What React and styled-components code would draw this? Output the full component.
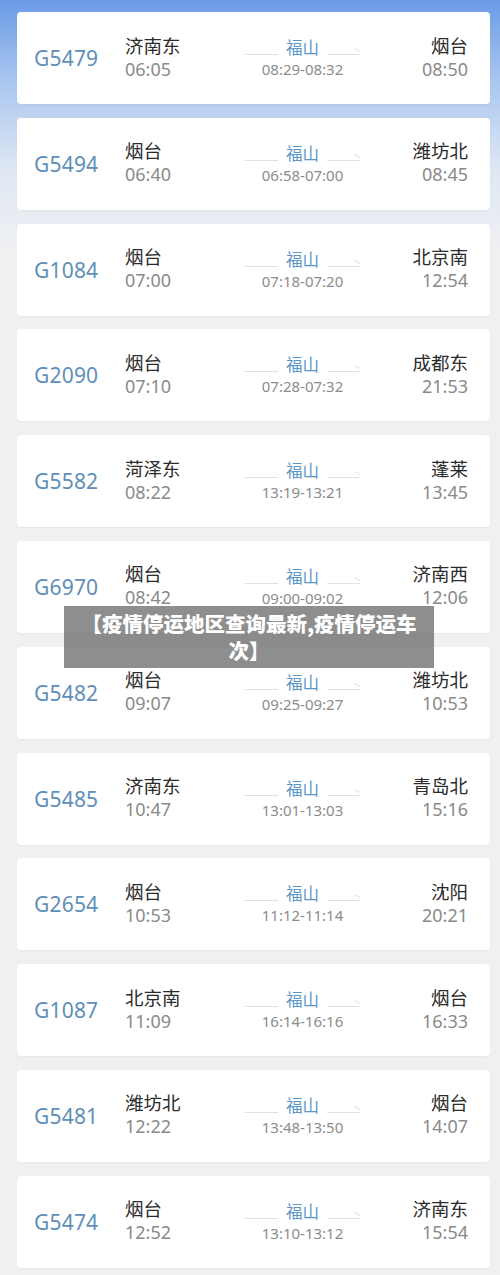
import styled, { createGlobalStyle } from "styled-components";

const GlobalStyle = createGlobalStyle`
  html, body {
    margin: 0;
    padding: 0;
  }
  body {
    font-family: "Noto Sans", "Noto Sans CJK SC", sans-serif;
    background: #f0f0f0;
  }
`;

const Page = styled.div`
  position: relative;
  width: 500px;
  min-height: 1275px;
  box-sizing: border-box;
  padding: 12px 10px 8px 17px;
  background: linear-gradient(
    180deg,
    #6b9be6 0px,
    #a9c6ef 80px,
    #dfe7f3 170px,
    #eff0f2 250px,
    #f0f0f0 100%
  );
  display: flex;
  flex-direction: column;
  gap: 13.8px;
`;

const Card = styled.div`
  height: 92px;
  background: #fff;
  border-radius: 4px;
  box-shadow: 0 1px 2px rgba(0, 0, 0, 0.04);
  display: grid;
  grid-template-columns: 91px 120px 115px 1fr;
  align-items: center;
  padding: 0 22px 0 17px;
`;

const TrainNo = styled.div`
  font-size: 21px;
  color: #5e8fb8;
  letter-spacing: 0.2px;
`;

const Stop = styled.div`
  display: flex;
  flex-direction: column;
  align-items: ${(p) => (p.$right ? "flex-end" : "flex-start")};
  margin-top: -3px;
`;

const Station = styled.div`
  font-family: "Noto Sans CJK SC", sans-serif;
  font-size: 18.5px;
  line-height: 24px;
  color: #2b2b2b;
`;

const Time = styled.div`
  font-size: 18px;
  line-height: 24px;
  color: #8a8a8a;
`;

const Mid = styled.div`
  display: flex;
  flex-direction: column;
  align-items: stretch;
`;

const MidTop = styled.div`
  display: flex;
  align-items: flex-end;
`;

const Line = styled.div`
  position: relative;
  flex: 1;
  height: 1px;
  margin-bottom: 3px;
  background: #e2e2e2;

  &::after {
    content: "";
    display: ${(p) => (p.$arrow ? "block" : "none")};
    position: absolute;
    right: 0;
    top: -3px;
    width: 6px;
    height: 1px;
    background: #e2e2e2;
    transform: rotate(30deg);
    transform-origin: right center;
  }
`;

const Via = styled.div`
  font-family: "Noto Sans CJK SC", sans-serif;
  font-size: 16.5px;
  line-height: 22px;
  color: #5b96c6;
  padding: 0 8px;
`;

const ViaTime = styled.div`
  font-size: 15px;
  line-height: 22px;
  color: #8c8c8c;
  text-align: center;
`;

const Banner = styled.div`
  position: absolute;
  left: 64px;
  top: 606px;
  width: 370px;
  height: 62px;
  box-sizing: border-box;
  padding: 4px 11px 0;
  background: rgba(110, 110, 110, 0.78);
  color: #fff;
  font-family: "Noto Sans CJK SC", sans-serif;
  font-weight: 900;
  font-size: 20.5px;
  line-height: 27px;
  text-align: center;
`;

const trains = [
  ["G5479", "济南东", "06:05", "08:29-08:32", "烟台", "08:50"],
  ["G5494", "烟台", "06:40", "06:58-07:00", "潍坊北", "08:45"],
  ["G1084", "烟台", "07:00", "07:18-07:20", "北京南", "12:54"],
  ["G2090", "烟台", "07:10", "07:28-07:32", "成都东", "21:53"],
  ["G5582", "菏泽东", "08:22", "13:19-13:21", "蓬莱", "13:45"],
  ["G6970", "烟台", "08:42", "09:00-09:02", "济南西", "12:06"],
  ["G5482", "烟台", "09:07", "09:25-09:27", "潍坊北", "10:53"],
  ["G5485", "济南东", "10:47", "13:01-13:03", "青岛北", "15:16"],
  ["G2654", "烟台", "10:53", "11:12-11:14", "沈阳", "20:21"],
  ["G1087", "北京南", "11:09", "16:14-16:16", "烟台", "16:33"],
  ["G5481", "潍坊北", "12:22", "13:48-13:50", "烟台", "14:07"],
  ["G5474", "烟台", "12:52", "13:10-13:12", "济南东", "15:54"],
];

const App = () => {
  return (
    <>
      <GlobalStyle />
      <Page>
        {trains.map(([no, from, dep, via, to, arr]) => (
          <Card key={no}>
            <TrainNo>{no}</TrainNo>
            <Stop>
              <Station>{from}</Station>
              <Time>{dep}</Time>
            </Stop>
            <Mid>
              <MidTop>
                <Line />
                <Via>福山</Via>
                <Line $arrow />
              </MidTop>
              <ViaTime>{via}</ViaTime>
            </Mid>
            <Stop $right>
              <Station>{to}</Station>
              <Time>{arr}</Time>
            </Stop>
          </Card>
        ))}
        <Banner>【疫情停运地区查询最新,疫情停运车次】</Banner>
      </Page>
    </>
  );
};

export default App;
